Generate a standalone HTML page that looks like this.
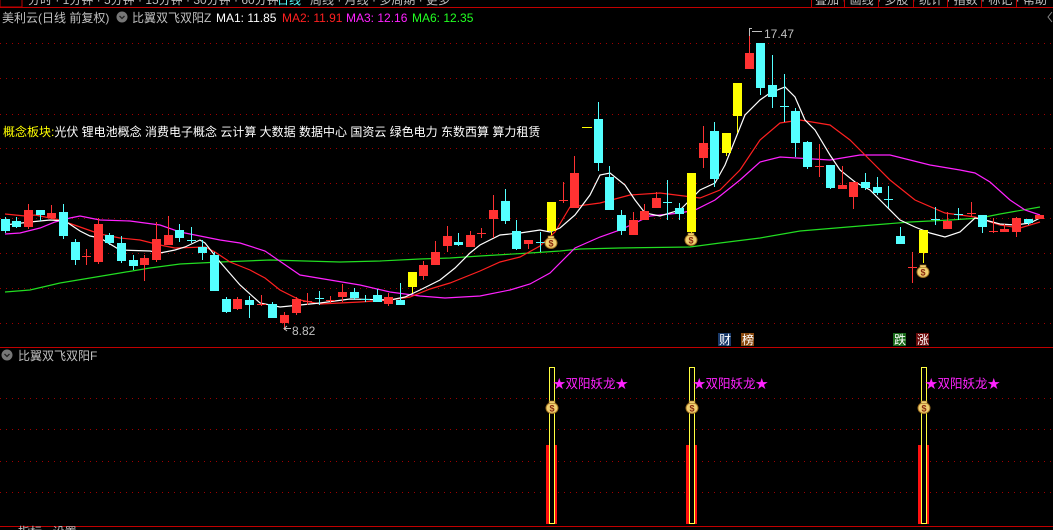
<!DOCTYPE html>
<html><head><meta charset="utf-8"><style>
html,body{margin:0;padding:0;background:#000;width:1053px;height:530px;overflow:hidden}
svg{display:block}
text{font-family:"Liberation Sans","Noto Sans CJK SC",sans-serif}
</style></head><body>
<svg id="s" width="1053" height="530" viewBox="0 0 1053 530" xmlns="http://www.w3.org/2000/svg">
<rect width="1053" height="530" fill="#000"/>
<g font-size="12" fill="#c0c0c0">
<text x="28" y="4">分时 · 1分钟 · 5分钟 · 15分钟 · 30分钟 · 60分钟</text>
<text x="277" y="4" fill="#54ffff">日线</text>
<text x="310" y="4">周线 · 月线 · 多周期 · 更多</text>
<text x="815" y="4">叠加 · 画线 · 多股 · 统计 · 指数 · 标记 · 帮助</text>
</g>
<rect x="0" y="-2" width="22" height="9" fill="none" stroke="#c00000"/>
<line x1="0" y1="7.5" x2="1053" y2="7.5" stroke="#c00000"/>
<g stroke="#c00000"><line x1="811.5" y1="0" x2="811.5" y2="7"/><line x1="844.5" y1="0" x2="844.5" y2="7"/><line x1="878.5" y1="0" x2="878.5" y2="7"/><line x1="913.5" y1="0" x2="913.5" y2="7"/><line x1="947.5" y1="0" x2="947.5" y2="7"/><line x1="981.5" y1="0" x2="981.5" y2="7"/><line x1="1016.5" y1="0" x2="1016.5" y2="7"/></g>
<g font-size="12">
<text x="2" y="22" fill="#c0c0c0">美利云(日线 前复权)</text>
<circle cx="122" cy="17" r="5.5" fill="#777"/>
<path d="M119.5 16 L122 18.5 L124.5 16" stroke="#222" stroke-width="1.3" fill="none"/>
<text x="132" y="22" fill="#c0c0c0">比翼双飞双阳Z</text>
<text x="216" y="22" fill="#fff">MA1: 11.85</text>
<text x="282" y="22" fill="#ff2020">MA2: 11.91</text>
<text x="346" y="22" fill="#ff22ff">MA3: 12.16</text>
<text x="412" y="22" fill="#22ff22">MA6: 12.35</text>
</g>
<path d="M1052 12 L1048 17 L1052 22" stroke="#888" fill="none"/>
<g stroke="#a00000" stroke-dasharray="1 5">
<line x1="0" y1="43.5" x2="1053" y2="43.5"/><line x1="0" y1="78.5" x2="1053" y2="78.5"/>
<line x1="0" y1="114.5" x2="1053" y2="114.5"/><line x1="0" y1="148.5" x2="1053" y2="148.5"/>
<line x1="0" y1="183.5" x2="1053" y2="183.5"/><line x1="0" y1="218.5" x2="1053" y2="218.5"/>
<line x1="0" y1="253.5" x2="1053" y2="253.5"/><line x1="0" y1="288.5" x2="1053" y2="288.5"/>
<line x1="0" y1="323.5" x2="1053" y2="323.5"/>
<line x1="0" y1="398.5" x2="1053" y2="398.5"/><line x1="0" y1="429.5" x2="1053" y2="429.5"/>
<line x1="0" y1="461.5" x2="1053" y2="461.5"/><line x1="0" y1="492.5" x2="1053" y2="492.5"/>
</g>
<text x="3" y="136" font-size="12" fill="#ffff00">概念板块:<tspan fill="#fff">光伏 锂电池概念 消费电子概念 云计算 大数据 数据中心 国资云 绿色电力 东数西算 算力租赁</tspan></text>
<g fill="none" stroke-width="1.2">
<polyline stroke="#22dd22" points="5,292 30,290 60,283 90,278 120,273 150,268 180,264 220,262 270,260 340,262 380,261 420,259 450,258 480,256 530,253 560,251 580,249 620,248 690,247 720,243 760,238 800,231 860,226 910,222 950,220 980,218 1000,214 1040,207"/>
<polyline stroke="#ff22ff" points="5,234 20,233 40,228 55,222 70,218 80,216 100,220 130,221 160,225 180,232 200,236 220,240 240,243 265,251 300,275 330,280 360,285 390,292 420,296 445,298 480,296 510,290 530,284 550,273 575,248 600,237 620,230 650,216 680,213 695,210 715,200 740,180 760,162 780,157 830,160 860,155 890,155 910,160 930,165 960,170 975,173 990,182 1010,200 1025,210 1040,215"/>
<polyline stroke="#ff2020" points="5,214 25,216 35,215 60,220 80,227 100,234 120,238 140,240 160,245 175,248 205,247 215,252 230,262 250,270 265,278 280,290 300,300 320,304 360,302 390,300 410,297 430,289 450,283 480,271 500,262 520,257 540,246 555,232 570,207 600,203 630,195 660,193 700,198 720,190 740,170 760,140 780,123 800,120 830,125 850,140 870,160 890,180 915,200 945,213 975,217 1000,225 1020,228 1040,222"/>
<polyline stroke="#ffffff" points="5,225 30,222 50,220 65,221 80,231 90,236 100,238 120,250 150,251 160,253 175,250 185,247 200,240 205,243 220,262 240,285 260,303 280,307 320,303 350,299 390,300 405,297 420,290 440,280 455,268 470,253 480,245 500,235 520,233 540,230 550,232 560,228 575,215 590,195 600,175 610,173 625,185 635,200 645,213 660,216 680,210 700,190 715,183 725,165 745,115 760,100 770,93 785,87 795,97 805,120 815,130 830,155 840,170 855,182 870,190 885,205 900,220 915,227 930,233 945,237 960,232 975,218 985,220 1000,224 1015,225 1030,223 1040,218"/>
</g>
<g id="candles"></g>
<line x1="582" y1="127.5" x2="592" y2="127.5" stroke="#ffff00"/>
<path d="M749.5 36 V28.5 H752 M752 31.5 H762" stroke="#c0c0c0" fill="none"/>
<text x="764" y="38" font-size="12" fill="#c0c0c0">17.47</text>
<path d="M284 328.5 H291 M287 326 L284 328.5 L287 331" stroke="#c0c0c0" fill="none"/>
<text x="292" y="335" font-size="12" fill="#c0c0c0">8.82</text>
<g font-size="12">
<rect x="718" y="333" width="13" height="13" fill="#1a3a6a"/><text x="719" y="344" fill="#fff">财</text>
<rect x="741" y="333" width="13" height="13" fill="#8a4a10"/><text x="742" y="344" fill="#fff">榜</text>
<rect x="893" y="333" width="13" height="13" fill="#1a6a1a"/><text x="894" y="344" fill="#fff">跌</text>
<rect x="916" y="333" width="13" height="13" fill="#6a0a0a"/><text x="917" y="344" fill="#fff">涨</text>
</g>
<line x1="0" y1="347.5" x2="1053" y2="347.5" stroke="#c00000"/>
<circle cx="7" cy="355" r="5.5" fill="#777"/>
<path d="M4.5 354 L7 356.5 L9.5 354" stroke="#222" stroke-width="1.3" fill="none"/>
<text x="18" y="360" font-size="12" fill="#c0c0c0">比翼双飞双阳F</text>
<g id="sub"></g>
<line x1="0" y1="526.5" x2="1053" y2="526.5" stroke="#c00000"/>
<text x="18" y="536" font-size="12" fill="#c0c0c0">指标 · 设置</text>
</svg>
<script>
var C={r:"#ff3232",c:"#54ffff",y:"#ffff00"};
var d=[[5,219,231,217,233,'c'],[16,221,227,217,228,'c'],[28,210,227,204,229,'r'],[40,210,215,210,221,'c'],[51,213,218,205,219,'r'],[63,212,236,204,239,'c'],[75,242,260,239,265,'c'],[86,256,256,249,265,'r'],[98,224,262,218,264,'r'],[109,235,243,233,245,'c'],[121,243,261,236,263,'c'],[133,260,266,255,270,'c'],[144,258,265,255,281,'r'],[156,239,260,222,262,'r'],[168,235,245,216,245,'r'],[179,230,238,224,242,'c'],[191,240,241,227,243,'c'],[202,247,253,240,260,'c'],[214,255,291,252,291,'c'],[226,299,312,297,313,'c'],[237,299,309,297,310,'r'],[249,300,305,296,318,'c'],[261,304,304,295,306,'r'],[272,304,318,302,318,'c'],
[284,315,323,312,330,'r'],[296,299,313,297,315,'r'],[307,301,301,293,305,'r'],[319,298,298,291,305,'c'],[330,300,300,296,303,'r'],[342,292,297,284,302,'r'],[354,292,298,288,300,'c'],[365,299,299,295,302,'c'],[377,295,302,289,302,'c'],[388,297,304,293,306,'r'],[400,300,305,283,303,'c'],[412,272,287,272,293,'y'],[423,265,276,261,280,'r'],[435,252,265,241,265,'r'],[447,236,246,226,252,'r'],[458,242,245,233,246,'c'],[470,235,247,231,247,'r'],[481,233,233,228,238,'r'],[493,210,219,195,238,'r'],[505,201,221,189,224,'c'],[516,231,249,220,250,'c'],[528,240,244,240,249,'r'],[540,242,242,232,252,'c'],
[551,202,231,202,235,'y'],[563,200,200,182,203,'r'],[574,173,208,156,208,'r'],[598,119,163,102,171,'c'],[609,177,210,166,210,'c'],[621,215,231,210,235,'c'],[633,220,235,212,235,'r'],[644,211,220,204,220,'r'],[656,198,208,192,208,'r'],[667,202,202,180,220,'c'],[679,208,214,203,220,'c'],[691,173,232,173,234,'y'],[703,143,158,126,168,'r'],[714,131,179,122,187,'c'],[726,133,153,133,156,'y'],[737,83,116,83,133,'y'],[749,53,69,32,69,'r'],[760,43,88,43,95,'c'],[772,85,97,55,108,'c'],[784,106,106,74,122,'c'],[795,111,143,108,157,'c'],[807,142,167,141,169,'c'],
[819,166,166,144,177,'r'],[830,165,188,165,189,'c'],[842,185,189,166,189,'r'],[853,182,197,182,209,'r'],[865,182,188,173,190,'c'],[877,187,193,177,195,'c'],[888,199,199,186,208,'c'],[900,236,244,227,244,'c'],[912,267,267,252,283,'r'],[923,230,253,230,263,'y'],[935,219,219,207,225,'c'],[947,221,229,212,229,'r'],[958,214,214,208,220,'c'],[971,213,213,202,217,'r'],[982,215,227,215,233,'c'],[993,231,231,218,233,'r'],[1004,229,232,224,232,'r'],[1016,218,232,217,237,'r'],[1028,219,223,219,225,'c'],[1039,215,219,215,219,'r']];
var h="";
d.forEach(function(c){var col=C[c[5]],x=c[0];
h+='<line x1="'+(x+.5)+'" y1="'+c[3]+'" x2="'+(x+.5)+'" y2="'+c[4]+'" stroke="'+col+'"/>';
if(c[2]-c[1]<2)h+='<line x1="'+(x-4)+'" y1="'+(c[1]+.5)+'" x2="'+(x+5)+'" y2="'+(c[1]+.5)+'" stroke="'+col+'"/>';
else h+='<rect x="'+(x-4)+'" y="'+c[1]+'" width="9" height="'+(c[2]-c[1])+'" fill="'+col+'"/>';});
function bag(x,y){return '<g><ellipse cx="'+x+'" cy="'+(y+1)+'" rx="6" ry="5.5" fill="#f0d070" stroke="#a07020"/><rect x="'+(x-3)+'" y="'+(y-6)+'" width="6" height="2.5" fill="#f0d070" stroke="#a07020" stroke-width=".6"/><text x="'+x+'" y="'+(y+4.5)+'" font-size="9" font-weight="bold" fill="#8a2a10" text-anchor="middle">$</text></g>';}
h+=bag(551,242)+bag(691,239)+bag(923,271);
document.getElementById("candles").innerHTML=h;
var s="";
[551,691,923].forEach(function(x){
s+='<rect x="'+(x-5)+'" y="445" width="11" height="79" fill="#ff1010"/>';
s+='<rect x="'+(x-1.5)+'" y="367.5" width="5" height="156" fill="#000" stroke="#ffff40"/>';
s+='<text x="'+(x+2)+'" y="388" font-size="12.5" fill="#ff22ff">★双阳妖龙★</text>';
s+=bag(x+1,407);});
document.getElementById("sub").innerHTML=s;
</script>
</body></html>
